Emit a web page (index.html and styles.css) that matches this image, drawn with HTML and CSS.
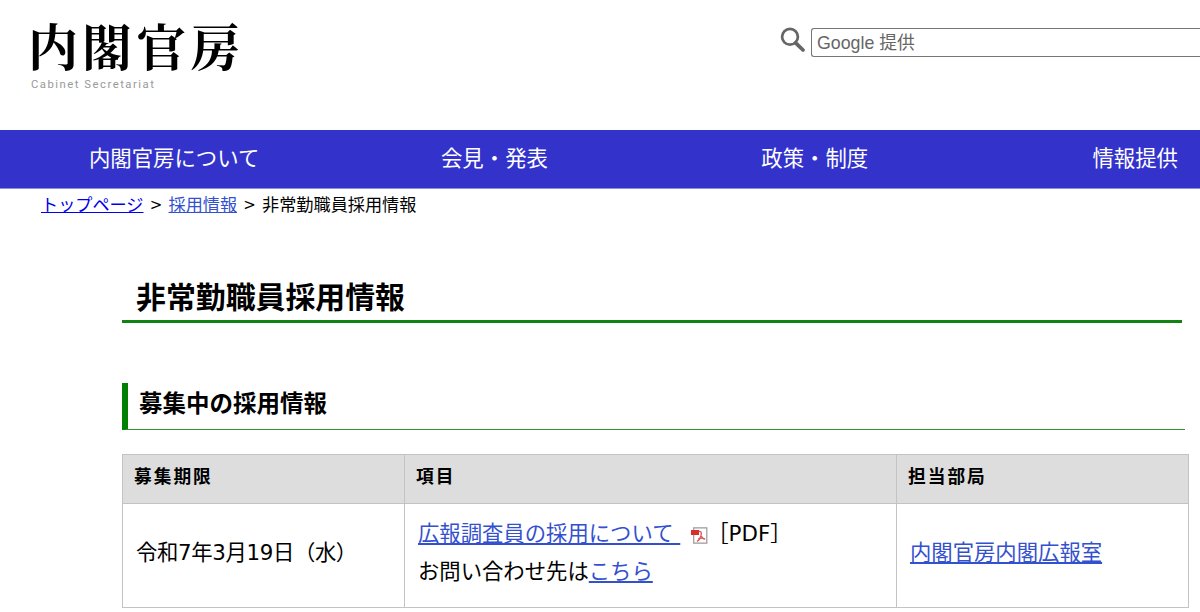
FILE: index.html
```html
<!DOCTYPE html>
<html lang="ja">
<head>
<meta charset="utf-8">
<title>非常勤職員採用情報</title>
<link rel="stylesheet" href="styles.css">
</head>
<body>
<header class="header">
  <div class="logo">
    <div class="logo-name">内閣官房</div>
    <div class="logo-sub">Cabinet Secretariat</div>
  </div>
  <form class="search">
    <svg class="search-icon" width="26" height="26" viewBox="0 0 26 26" fill="none" stroke="#666"><circle cx="10" cy="9.8" r="7.9" stroke-width="2.7"/><path d="M15.6 15.8L23 23" stroke-width="3.8" stroke-linecap="round"/></svg>
    <div class="search-box">Google 提供</div>
  </form>
</header>
<nav class="nav">
  <a class="nav-item">内閣官房について</a>
  <a class="nav-item">会見・発表</a>
  <a class="nav-item">政策・制度</a>
  <a class="nav-item nav-last">情報提供</a>
</nav>
<div class="crumbs"><a class="crumb-top" href="#">トップページ</a><span class="sep">&gt;</span><a class="link" href="#">採用情報</a><span class="sep">&gt;</span><span>非常勤職員採用情報</span></div>
<main class="main">
  <h1 class="title">非常勤職員採用情報</h1>
  <h2 class="subtitle">募集中の採用情報</h2>
  <table class="jobs">
    <tr class="head"><th class="c-date">募集期限</th><th class="c-item">項目</th><th class="c-dept">担当部局</th></tr>
    <tr class="row">
      <td class="date">令和7年3月19日（水）</td>
      <td><div class="line"><a class="link wide" href="#">広報調査員の採用について&nbsp;</a><svg class="pdf" width="17" height="17" viewBox="0 0 17 17"><path d="M2.7 .8H15.8V16.2H2.7Z" fill="#fff" stroke="#999" stroke-width="1.2"/><path d="M8 4.5C11 4 10.5 7 9.8 9.2C9 11.5 7.5 13.8 6 14.3M9.7 7.5C10.5 10 12 12 14.2 12.2M7.2 12Q10 10.4 13.8 11.8" fill="none" stroke="#e05252" stroke-width="1.3"/><rect x="0" y="3" width="8" height="5" fill="#d92e2e"/></svg><span class="pdf-label">［PDF］</span></div>
      <div class="line">お問い合わせ先は<a class="link" href="#">こちら</a></div></td>
      <td><a class="link" href="#">内閣官房内閣広報室</a></td>
    </tr>
  </table>
</main>
</body>
</html>
```
FILE: styles.css
```css
body {
  margin: 0;
  height: 612px;
  overflow: hidden;
  background: #fff;
  color: #000;
  font-family: "DejaVu Sans", "Noto Sans CJK JP", sans-serif;
}
.header {
  display: flex;
  justify-content: space-between;
  height: 130px;
}
.logo { padding: 19px 0 0 28px; }
.logo-name {
  height: 59px;
  font: 700 50px/51px "Noto Serif CJK JP", "Noto Sans CJK JP", serif;
  letter-spacing: 4px;
  white-space: nowrap;
}
.logo-sub {
  padding-left: 3px;
  color: #999;
  font: 11.3px/13px Roboto, "Liberation Sans", sans-serif;
  letter-spacing: 1.5px;
}
.search { display: flex; width: 420px; }
.search-icon { flex: none; margin: 27px 5px 0 0; }
.search-box {
  flex: 1;
  box-sizing: border-box;
  height: 29px;
  margin-top: 28px;
  padding-left: 5px;
  border: 1px solid #767676;
  border-right: 0;
  border-radius: 3px 0 0 3px;
  color: #666;
  font: 17.8px/28px "Liberation Sans", "Noto Sans CJK JP", sans-serif;
}
.nav {
  display: grid;
  grid-template-columns: repeat(3, 320.3px) 1fr;
  height: 58px;
  padding-left: 14px;
  border-bottom: 1px solid #8f8fe2;
  background: #33c;
}
.nav-item {
  color: #fff;
  font-size: 21.4px;
  line-height: 57px;
  text-align: center;
}
.nav-last { padding-right: 22px; text-align: right; }
.crumbs {
  display: flex;
  height: 32px;
  padding-left: 41px;
  font-size: 17.15px;
  line-height: 33px;
}
.crumb-top { color: #00e; }
.sep { width: 25px; font-size: 15px; text-align: center; }
.link { color: #3350cf; }
.main { padding: 0 11px 0 122px; }
.title {
  box-sizing: border-box;
  width: 1060px;
  height: 51px;
  margin: 51px 0 60px;
  padding-left: 14px;
  border-bottom: 3px solid #128212;
  font-size: 29.9px;
  line-height: 52px;
}
.subtitle {
  box-sizing: border-box;
  width: 1063px;
  height: 47px;
  margin: 0 0 24px;
  padding-left: 11px;
  border-bottom: 1px solid #2f962f;
  border-left: 6px solid #008000;
  font-size: 23.5px;
  line-height: 43px;
}
.jobs {
  width: 1067px;
  border-collapse: collapse;
  table-layout: fixed;
}
.jobs th, .jobs td { border: 1px solid #c3c3c3; text-align: left; }
.jobs th {
  height: 48px;
  padding: 0 0 0 11px;
  background: #ddd;
  font-size: 17.7px;
  line-height: 44px;
  letter-spacing: 2px;
  vertical-align: top;
}
.jobs td {
  height: 97px;
  padding: 0 0 6px 13px;
  font-size: 21.35px;
  line-height: 38px;
  white-space: nowrap;
}
.jobs .date { letter-spacing: -.35px; }
.c-date { width: 270px; }
.c-item { width: 480px; }
.line { display: flex; height: 38px; align-items: center; }
.pdf { margin: 3px 0 0 11px; }
.pdf-label { margin-left: -1px; }
```
